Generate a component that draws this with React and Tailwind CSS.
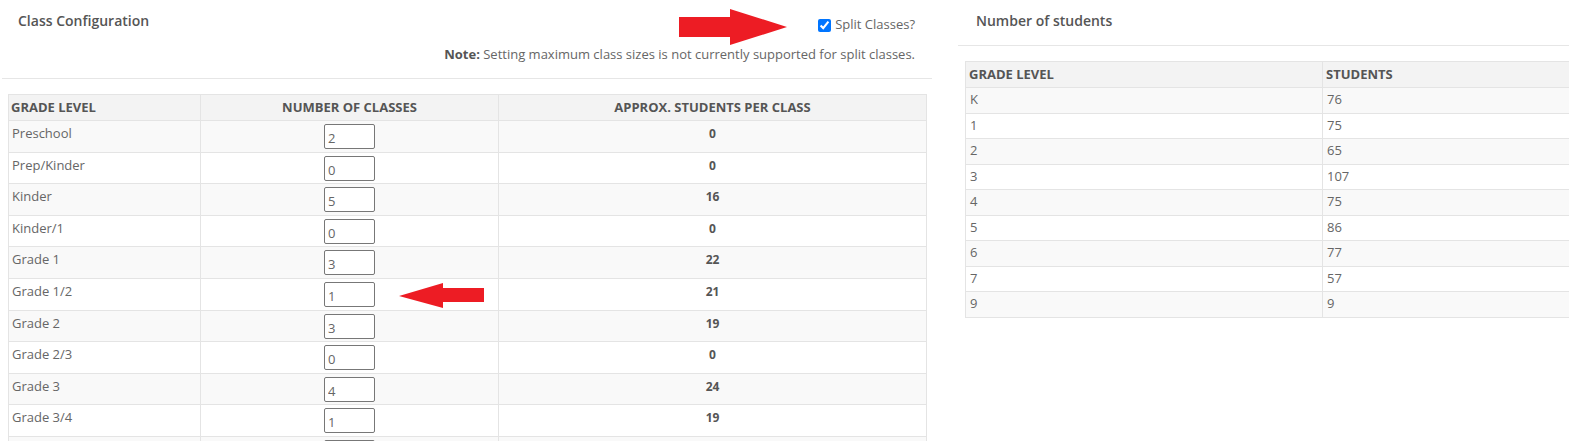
import { useState } from "react";

const classRows = [
  { grade: "Preschool", classes: "2", approx: "0" },
  { grade: "Prep/Kinder", classes: "0", approx: "0" },
  { grade: "Kinder", classes: "5", approx: "16" },
  { grade: "Kinder/1", classes: "0", approx: "0" },
  { grade: "Grade 1", classes: "3", approx: "22" },
  { grade: "Grade 1/2", classes: "1", approx: "21" },
  { grade: "Grade 2", classes: "3", approx: "19" },
  { grade: "Grade 2/3", classes: "0", approx: "0" },
  { grade: "Grade 3", classes: "4", approx: "24" },
  { grade: "Grade 3/4", classes: "1", approx: "19" },
  { grade: "Grade 4", classes: "3", approx: "25" },
];

const studentRows = [
  ["K", "76"],
  ["1", "75"],
  ["2", "65"],
  ["3", "107"],
  ["4", "75"],
  ["5", "86"],
  ["6", "77"],
  ["7", "57"],
  ["9", "9"],
];

export default function App() {
  const [split, setSplit] = useState(true);
  const [counts, setCounts] = useState(classRows.map((r) => r.classes));

  const handleCount = (i, value) => {
    const next = [...counts];
    next[i] = value;
    setCounts(next);
  };

  return (
    <div
      className="relative flex h-[441px] overflow-hidden bg-white text-[#666]"
      style={{ fontFamily: '"Open Sans", "Liberation Sans", sans-serif' }}
    >
      {/* class configuration */}
      <div className="ml-[2px] w-[930px] shrink-0">
        <div className="flex h-[79px] items-start justify-between border-b border-[#e6e6e6] pl-[16px] pr-[17px]">
          <h2 className="mt-[11px] text-[14px] font-semibold leading-[20px] text-[#555]">
            Class Configuration
          </h2>
          <div className="mt-[16px] flex flex-col items-end">
            <label className="flex h-[18px] items-center gap-[4px] text-[13px] text-[#666]">
              <input
                type="checkbox"
                checked={split}
                onChange={(e) => setSplit(e.target.checked)}
                className="h-[13px] w-[13px]"
              />
              Split Classes?
            </label>
            <p className="mt-[11px] text-[13px] leading-[18px] text-[#666]">
              <span className="font-bold text-[#555]">Note:</span> Setting maximum class sizes is not
              currently supported for split classes.
            </p>
          </div>
        </div>

        <div className="px-[6px] pt-[15px]">
          <table className="w-[918px] table-fixed border-collapse text-[13px]">
            <colgroup>
              <col className="w-[192px]" />
              <col className="w-[298px]" />
              <col className="w-[428px]" />
            </colgroup>
            <thead>
              <tr className="h-[26px] bg-[#f3f3f3] text-[13px] font-bold uppercase text-[#555]">
                <th className="border border-[#e4e4e4] px-[2px] text-left align-middle">Grade Level</th>
                <th className="border border-[#e4e4e4] px-[4px] text-center align-middle">
                  Number of Classes
                </th>
                <th className="border border-[#e4e4e4] px-[4px] text-center align-middle">
                  Approx. Students per Class
                </th>
              </tr>
            </thead>
            <tbody>
              {classRows.map((row, i) => (
                <tr key={row.grade} className={`h-[31.6px] ${i % 2 === 0 ? "bg-[#f9f9f9]" : "bg-white"}`}>
                  <td className="border border-[#e4e4e4] px-[3px] pt-[4px] align-top leading-[17px]">
                    {row.grade}
                  </td>
                  <td className="border border-[#e4e4e4] pt-[3px] text-center align-top">
                    <input
                      type="text"
                      value={counts[i]}
                      onChange={(e) => handleCount(i, e.target.value)}
                      className="h-[25px] w-[51px] rounded-[2px] border border-[#777] bg-white pl-[3px] pt-[3px] text-[13px] text-[#666] outline-none"
                    />
                  </td>
                  <td className="border border-[#e4e4e4] pt-[4px] text-center align-top text-[12px] font-bold leading-[17px] text-[#555]">
                    {row.approx}
                  </td>
                </tr>
              ))}
            </tbody>
          </table>
        </div>
      </div>

      {/* number of students */}
      <div className="ml-[26px] flex-1">
        <div className="h-[46px] border-b border-[#e6e6e6] pl-[18px]">
          <h2 className="pt-[11px] text-[14px] font-semibold leading-[20px] text-[#555]">
            Number of students
          </h2>
        </div>
        <div className="pl-[7px] pt-[15px]">
          <table className="w-[610px] table-fixed border-collapse text-[13px]">
            <colgroup>
              <col className="w-[357px]" />
              <col />
            </colgroup>
            <thead>
              <tr className="h-[26px] bg-[#f3f3f3] text-[13px] font-bold uppercase text-[#555]">
                <th className="border border-[#e4e4e4] px-[3px] text-left align-middle">Grade Level</th>
                <th className="border border-[#e4e4e4] px-[3px] text-left align-middle">Students</th>
              </tr>
            </thead>
            <tbody>
              {studentRows.map(([grade, count], i) => (
                <tr key={grade} className={`h-[25.5px] ${i % 2 === 1 ? "bg-white" : "bg-[#f9f9f9]"}`}>
                  <td className="border border-[#e4e4e4] px-[4px] pt-[3px] align-top leading-[17px]">{grade}</td>
                  <td className="border border-[#e4e4e4] px-[4px] pt-[3px] align-top leading-[17px]">{count}</td>
                </tr>
              ))}
            </tbody>
          </table>
        </div>
      </div>

      {/* annotation arrows */}
      <svg className="absolute left-[679px] top-[8px]" width="110" height="40" viewBox="0 0 110 40">
        <polygon points="0,9 51,9 51,1 108,19 51,37 51,29 0,29" fill="#ed1c24" />
      </svg>
      <svg className="absolute left-[398px] top-[282px]" width="88" height="27" viewBox="0 0 88 27">
        <polygon points="1,14 45,1 45,6 86,6 86,20 45,20 45,26" fill="#ed1c24" />
      </svg>
    </div>
  );
}
